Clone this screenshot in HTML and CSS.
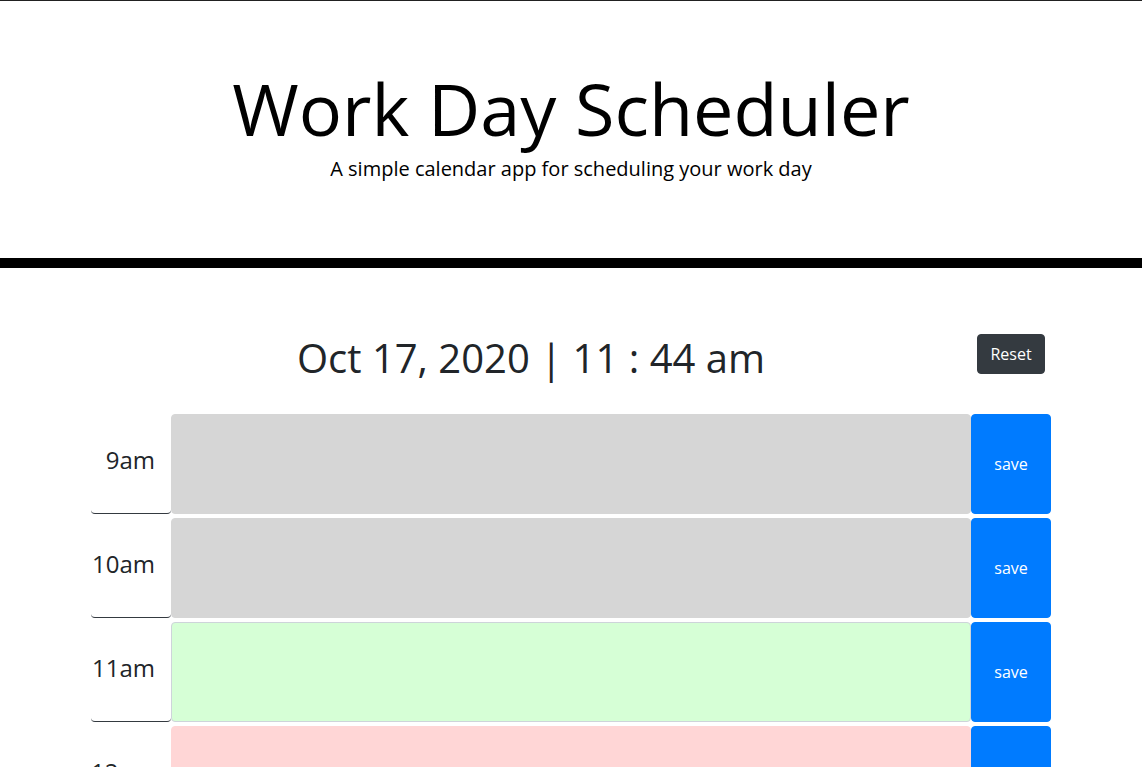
FILE: index.html
```html
<!DOCTYPE html>
<html lang="en">
<head>
<meta charset="utf-8">
<title>Work Day Scheduler</title>
<link rel="stylesheet" href="styles.css">
</head>
<body>
<header class="jumbotron">
  <h1 class="title">Work Day Scheduler</h1>
  <p class="lead">A simple calendar app for scheduling your work day</p>
</header>
<main class="container">
  <div class="date-row">
    <p class="current-day">Oct 17, 2020 | 11 : 44 am</p>
    <div class="reset-col"><button class="btn-reset">Reset</button></div>
  </div>
  <div class="time-block">
    <div class="hour">9am</div>
    <textarea class="description past"></textarea>
    <button class="save-btn">save</button>
  </div>
  <div class="time-block">
    <div class="hour">10am</div>
    <textarea class="description past"></textarea>
    <button class="save-btn">save</button>
  </div>
  <div class="time-block">
    <div class="hour">11am</div>
    <textarea class="description present"></textarea>
    <button class="save-btn">save</button>
  </div>
  <div class="time-block">
    <div class="hour">12pm</div>
    <textarea class="description future"></textarea>
    <button class="save-btn">save</button>
  </div>
  <div class="time-block">
    <div class="hour">1pm</div>
    <textarea class="description future"></textarea>
    <button class="save-btn">save</button>
  </div>
  <div class="time-block">
    <div class="hour">2pm</div>
    <textarea class="description future"></textarea>
    <button class="save-btn">save</button>
  </div>
  <div class="time-block">
    <div class="hour">3pm</div>
    <textarea class="description future"></textarea>
    <button class="save-btn">save</button>
  </div>
  <div class="time-block">
    <div class="hour">4pm</div>
    <textarea class="description future"></textarea>
    <button class="save-btn">save</button>
  </div>
  <div class="time-block">
    <div class="hour">5pm</div>
    <textarea class="description future"></textarea>
    <button class="save-btn">save</button>
  </div>
</main>
</body>
</html>
```

FILE: styles.css
```css
* { box-sizing: border-box; }

body {
  margin: 0;
  border-top: 1px solid #212121;
  font-family: "Open Sans", "Liberation Sans", sans-serif;
  color: #212529;
  background: #fff;
}

.jumbotron {
  text-align: center;
  color: #000;
  padding: 64px 32px 64px;
  border-bottom: 10px solid #000;
  margin: 0 0 66px;
}

.title {
  margin: 0;
  font-size: 72px;
  font-weight: 400;
  line-height: 1.2;
}

.lead {
  margin: 3px 0 10px;
  font-size: 20px;
  font-weight: 400;
  line-height: 1.5;
}

.container {
  width: 960px;
  margin: 0 auto;
  padding-bottom: 40px;
}

.date-row {
  display: flex;
  align-items: flex-start;
  margin-bottom: 32px;
}

.current-day {
  flex: 0 0 880px;
  margin: 0;
  text-align: center;
  font-size: 40px;
  line-height: 48px;
  font-weight: 400;
}

.reset-col {
  flex: 0 0 80px;
  display: flex;
  justify-content: center;
  padding-top: 0;
}

.btn-reset {
  font-family: inherit;
  font-size: 16px;
  line-height: 24px;
  padding: 7px 12px;
  color: #fff;
  background: #343a40;
  border: 1px solid #343a40;
  border-radius: 4px;
}

.time-block {
  display: flex;
  height: 100px;
  margin-bottom: 4px;
}

.hour {
  flex: 0 0 80px;
  display: flex;
  align-items: center;
  justify-content: flex-end;
  padding: 0 16px 8px 0;
  font-size: 24px;
  color: #212529;
  border-bottom: 1px solid #343a40;
  border-radius: 0 0 4px 4px;
}

.description {
  flex: 0 0 800px;
  height: 100px;
  margin: 0;
  resize: none;
  border: 1px solid #d6d6d6;
  border-radius: 4px;
  font-family: inherit;
}

.past { background: #d6d6d6; border-color: #d6d6d6; }
.present { background: #d6ffd6; border-color: #ced4da; }
.future { background: #ffd6d6; border-color: #ffd6d6; }

.save-btn {
  flex: 0 0 80px;
  height: 100px;
  font-family: inherit;
  font-size: 16px;
  color: #fff;
  background: #007bff;
  border: 1px solid #007bff;
  border-radius: 4px;
  padding: 0;
}
```
